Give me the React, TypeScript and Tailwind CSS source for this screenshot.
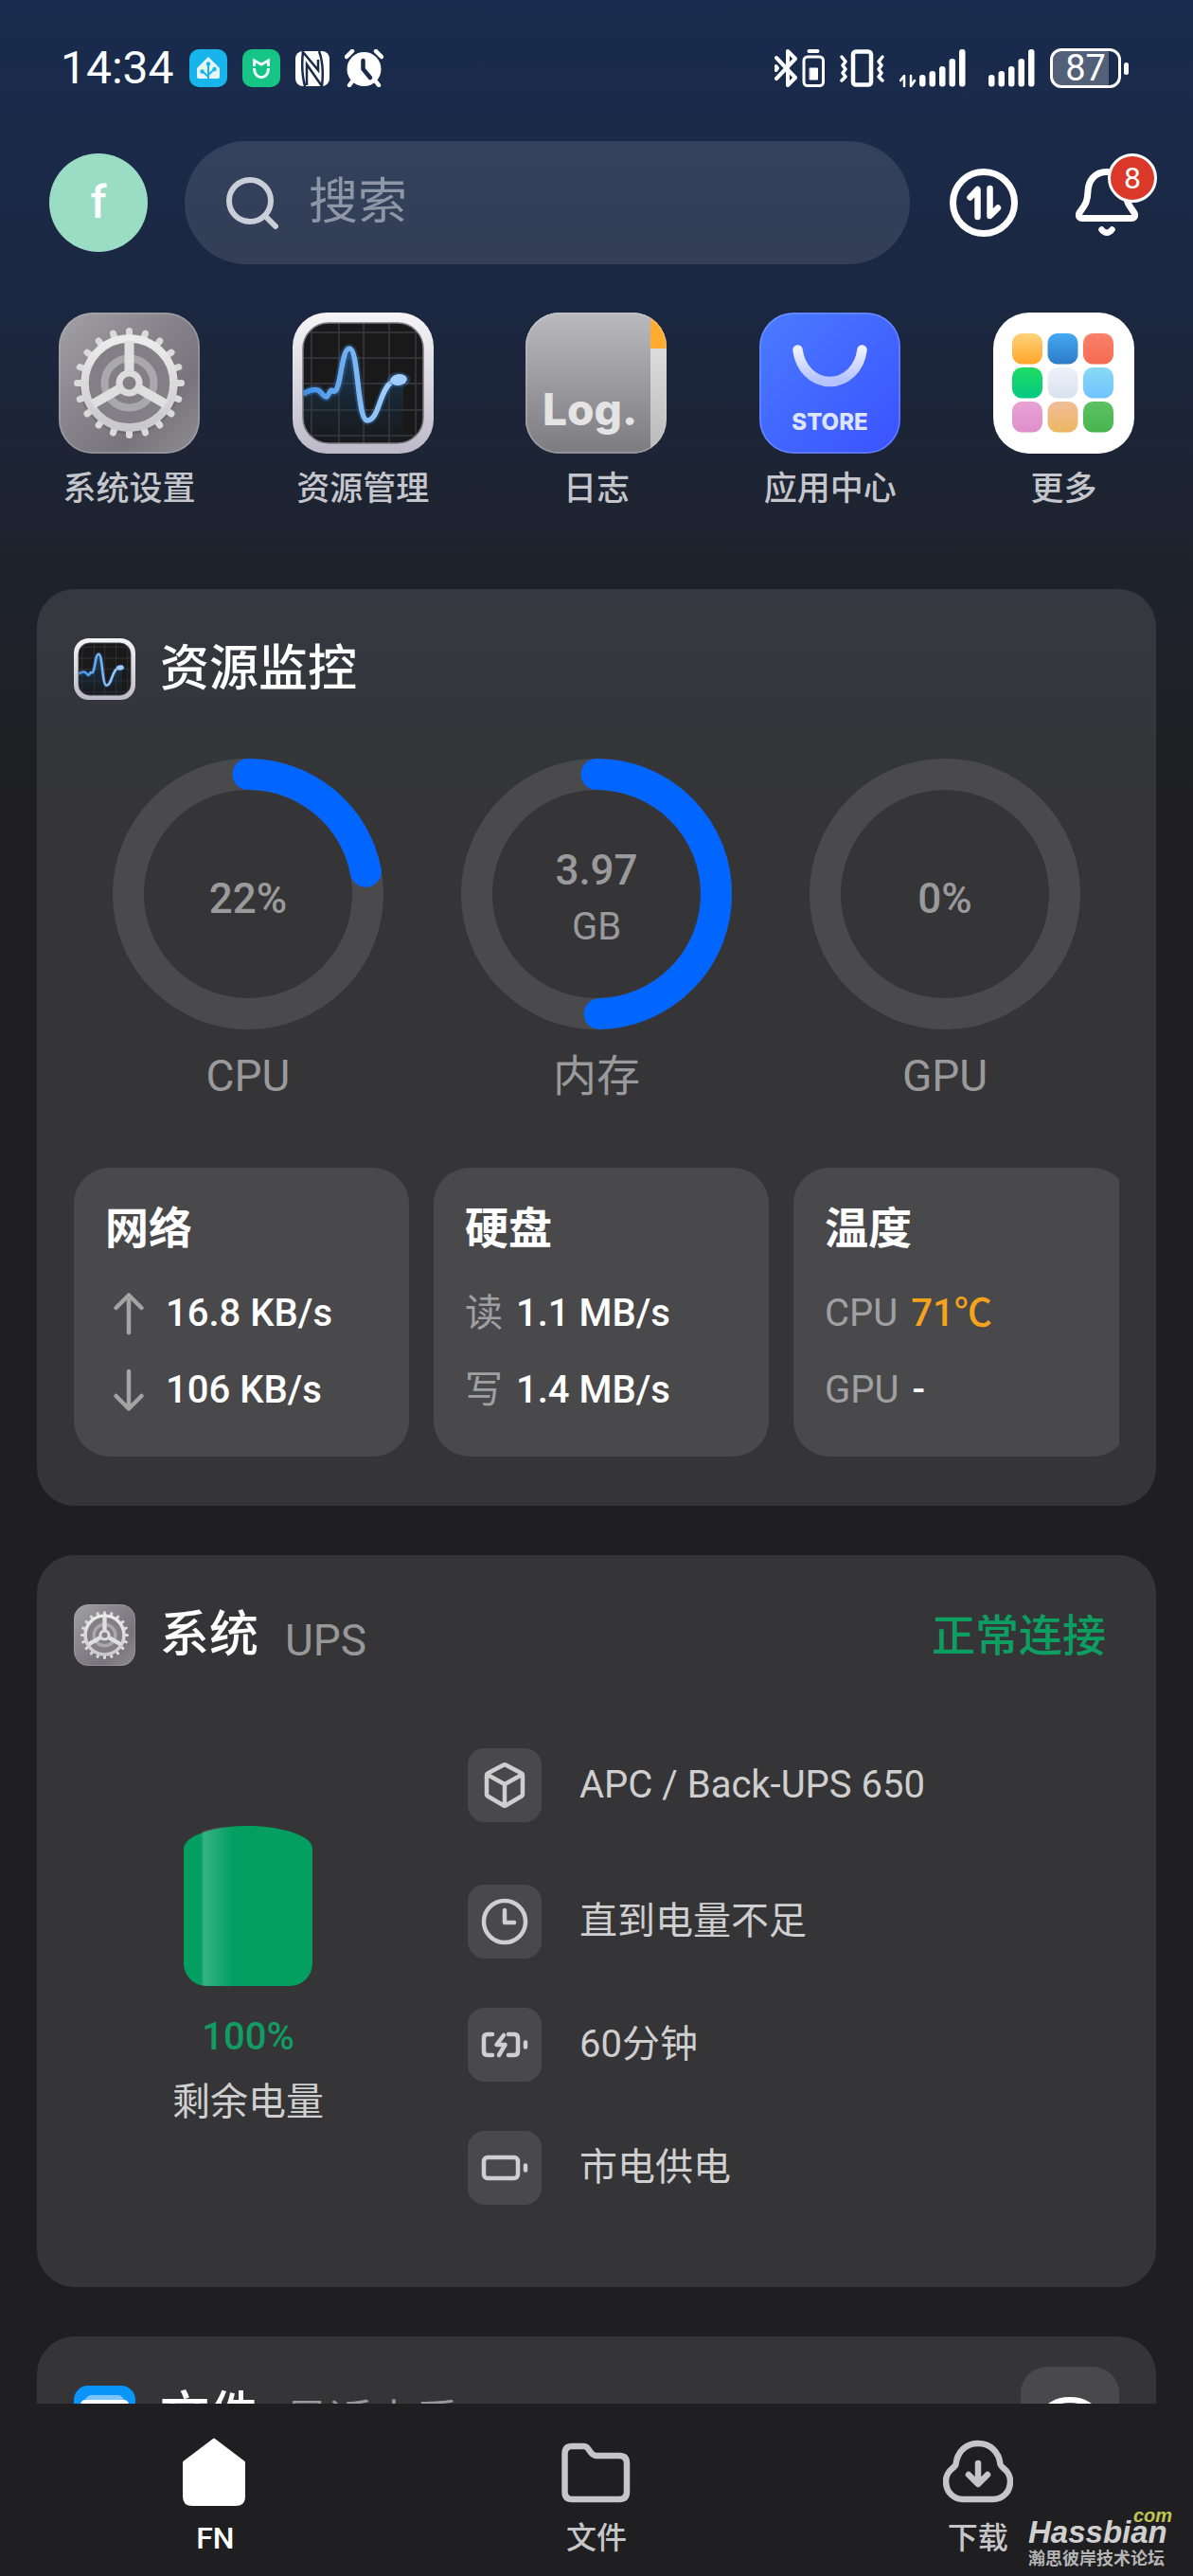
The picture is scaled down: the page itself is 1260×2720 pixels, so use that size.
import React from 'react';

const TEETH = Array.from({ length: 20 }, (_, i) => i * 18);

const GearIcon = ({ className, id }: { className: string; id: string }) => (
  <svg viewBox="0 0 149 149" className={className} aria-hidden="true">
    <defs>
      <linearGradient id={`${id}-bg`} x1="0" y1="0" x2="1" y2="1">
        <stop offset="0" stopColor="#a2a1a6" />
        <stop offset="0.35" stopColor="#8b898f" />
        <stop offset="0.7" stopColor="#77757b" />
        <stop offset="1" stopColor="#8f8e93" />
      </linearGradient>
      <linearGradient id={`${id}-fg`} x1="0" y1="0" x2="0" y2="1">
        <stop offset="0" stopColor="#ececec" />
        <stop offset="1" stopColor="#c9c9cb" />
      </linearGradient>
    </defs>
    <rect width="149" height="149" rx="36" fill={`url(#${id}-bg)`} />
    <rect x="1" y="1" width="147" height="147" rx="35" fill="none" stroke="#b5b4b8" strokeOpacity="0.5" strokeWidth="1.5" />
    <circle cx="74.5" cy="76" r="47" fill="none" stroke="#5f5e63" strokeOpacity="0.5" strokeWidth="11" />
    <circle cx="74.5" cy="74.5" r="43" fill="#828086" />
    <circle cx="74.5" cy="74.5" r="26" fill="none" stroke="#a9a8ac" strokeWidth="8" />
    <g stroke="#dadadb" strokeWidth="7" strokeLinecap="round">
      {TEETH.map((deg) => (
        <line key={deg} x1="74.5" y1="26" x2="74.5" y2="19.5" transform={`rotate(${deg} 74.5 74.5)`} />
      ))}
    </g>
    <circle cx="74.5" cy="74.5" r="47" fill="none" stroke={`url(#${id}-fg)`} strokeWidth="8.5" />
    <g stroke="#dfdfe0" strokeWidth="10">
      <line x1="74.5" y1="63" x2="74.5" y2="30" />
      <line x1="74.5" y1="63" x2="74.5" y2="30" transform="rotate(120 74.5 74.5)" />
      <line x1="74.5" y1="63" x2="74.5" y2="30" transform="rotate(240 74.5 74.5)" />
    </g>
    <circle cx="74.5" cy="74.5" r="10.5" fill="#828086" stroke="#dcdcdd" strokeWidth="7" />
  </svg>
);

const PulseIcon = ({ className, id }: { className: string; id: string }) => (
  <svg viewBox="0 0 149 149" className={className} aria-hidden="true">
    <defs>
      <linearGradient id={`${id}-frame`} x1="0" y1="0" x2="0" y2="1">
        <stop offset="0" stopColor="#f5f5f7" />
        <stop offset="1" stopColor="#bdb9c8" />
      </linearGradient>
      <linearGradient id={`${id}-line`} x1="0" y1="0" x2="1" y2="0">
        <stop offset="0" stopColor="#3f8fe6" />
        <stop offset="1" stopColor="#a5d0fb" />
      </linearGradient>
      <linearGradient id={`${id}-area`} x1="0" y1="0" x2="0" y2="1">
        <stop offset="0" stopColor="#1f5f95" stopOpacity="0.6" />
        <stop offset="1" stopColor="#12263a" stopOpacity="0.1" />
      </linearGradient>
      <clipPath id={`${id}-clip`}>
        <rect x="11" y="11" width="127" height="127" rx="27" />
      </clipPath>
    </defs>
    <rect width="149" height="149" rx="36" fill={`url(#${id}-frame)`} />
    <rect x="11" y="11" width="127" height="127" rx="27" fill="#19191a" />
    <g clipPath={`url(#${id}-clip)`}>
      <path d="M20 11V138M49 11V138M75 11V138M102 11V138M130 11V138M11 21H138M11 48H138M11 75H138M11 103H138M11 130H138" stroke="#4b4b50" strokeWidth="1.5" strokeOpacity="0.7" />
      <path d="M11 86C16 83 22 80 27 82C31 84 33 90 36 89C39 87 39 80 43 83C51 87 51 38 60 38C70 38 68 114 79 114C91 114 92 82 104 77H117V138H11Z" fill={`url(#${id}-area)`} />
      <path d="M11 86C16 83 22 80 27 82C31 84 33 90 36 89C39 87 39 80 43 83C51 87 51 38 60 38C70 38 68 114 79 114C91 114 92 82 104 74" fill="none" stroke="#3a8be0" strokeOpacity="0.25" strokeWidth="10" />
      <path d="M11 86C16 83 22 80 27 82C31 84 33 90 36 89C39 87 39 80 43 83C51 87 51 38 60 38C70 38 68 114 79 114C91 114 92 82 104 74" fill="none" stroke={`url(#${id}-line)`} strokeWidth="5.5" />
      <ellipse cx="112" cy="71" rx="12" ry="8" fill="#3a8be0" fillOpacity="0.3" />
      <ellipse cx="112" cy="71" rx="9" ry="6" fill="#9fccfb" transform="rotate(-8 112 71)" />
    </g>
    <rect x="11" y="11" width="127" height="127" rx="27" fill="none" stroke="#77767d" strokeWidth="1.5" />
  </svg>
);

const LogIcon = () => (
  <svg viewBox="0 0 149 149" className="size-[149px]" aria-hidden="true">
    <defs>
      <linearGradient id="log-bg" x1="0" y1="0" x2="0" y2="1">
        <stop offset="0" stopColor="#bab9be" />
        <stop offset="1" stopColor="#7c7b80" />
      </linearGradient>
      <linearGradient id="log-page" x1="0" y1="0" x2="0" y2="1">
        <stop offset="0" stopColor="#e9e9e9" />
        <stop offset="1" stopColor="#b9b9ba" />
      </linearGradient>
      <clipPath id="log-clip">
        <rect width="149" height="149" rx="36" />
      </clipPath>
    </defs>
    <g clipPath="url(#log-clip)">
      <rect width="149" height="149" fill="url(#log-page)" />
      <rect x="130" width="19" height="38" fill="#ffab2e" />
      <rect width="132" height="149" fill="url(#log-bg)" />
    </g>
    <rect x="1" y="1" width="147" height="147" rx="35" fill="none" stroke="#d6d6d8" strokeOpacity="0.3" strokeWidth="1.5" />
    <text x="18" y="119" fill="#e4e4e5" className="font-['Inter'] text-[46px] font-extrabold">Log.</text>
  </svg>
);

const StoreIcon = () => (
  <svg viewBox="0 0 149 149" className="size-[149px]" aria-hidden="true">
    <defs>
      <linearGradient id="store-bg" x1="0" y1="0" x2="1" y2="1">
        <stop offset="0" stopColor="#4a7bff" />
        <stop offset="1" stopColor="#3a52ff" />
      </linearGradient>
      <linearGradient id="store-bag" x1="0" y1="0" x2="0" y2="1">
        <stop offset="0" stopColor="#ecf0ff" />
        <stop offset="1" stopColor="#b4c2ff" />
      </linearGradient>
    </defs>
    <rect width="149" height="149" rx="36" fill="url(#store-bg)" />
    <rect x="1" y="1" width="147" height="147" rx="35" fill="none" stroke="#8aa5ff" strokeOpacity="0.5" strokeWidth="1.5" />
    <path d="M40.5 39.5C43 59 57 73 74.5 73S106 59 108.5 39.5" fill="none" stroke="url(#store-bag)" strokeWidth="10.5" strokeLinecap="round" />
    <text x="74.5" y="124" textAnchor="middle" fill="#dde4ff" className="font-['Inter'] text-[24px] font-extrabold">STORE</text>
  </svg>
);

const TILES = [
  ['#ffd27a', '#ffa629'], ['#45a8f2', '#2d7cc9'], ['#f9806a', '#f66b52'],
  ['#1fdc62', '#06c985'], ['#eef1f9', '#d9e2f0'], ['#8ad8f3', '#6fc4ff'],
  ['#e9a1d3', '#de8fcd'], ['#f0be97', '#edb662'], ['#5cc163', '#48b54d'],
];

const MoreIcon = () => (
  <svg viewBox="0 0 149 149" className="size-[149px]" aria-hidden="true">
    <rect width="149" height="149" rx="38" fill="#fff" />
    {TILES.map(([from, to], i) => (
      <g key={from}>
        <linearGradient id={`tile-${i}`} x1="0" y1="0" x2="0" y2="1">
          <stop offset="0" stopColor={from} />
          <stop offset="1" stopColor={to} />
        </linearGradient>
        <rect x={20 + (i % 3) * 37.5} y={22 + Math.floor(i / 3) * 36} width="32" height="32.5" rx="10" fill={`url(#tile-${i})`} />
      </g>
    ))}
  </svg>
);

const Signal = ({ arrows }: { arrows?: boolean }) => (
  <svg viewBox="0 0 70 40" className={arrows ? 'h-10 w-[70px]' : 'h-10 w-[57px]'} preserveAspectRatio="xMaxYMid slice" fill="#fff" aria-hidden="true">
    {arrows && <path d="M1 33L5 28V39M12 28V39L16 33" fill="none" stroke="#fff" strokeWidth="2.5" strokeLinecap="round" strokeLinejoin="round" />}
    <rect x="21" y="27" width="6.5" height="12.5" rx="3" />
    <rect x="31.5" y="23" width="6.5" height="16.5" rx="3" />
    <rect x="42" y="18" width="6.5" height="21.5" rx="3" />
    <rect x="52.5" y="10" width="6.5" height="29.5" rx="3" />
    <rect x="63" y="0" width="6.5" height="39.5" rx="3" />
  </svg>
);

const StatusBar = () => (
  <div className="flex h-36 items-center justify-between pr-[68px] pl-16">
    <div className="flex items-center gap-4">
      <span className="text-[48px] leading-[60px]">14:34</span>
      <svg viewBox="0 0 40 40" className="size-10" aria-hidden="true">
        <rect width="40" height="40" rx="10" fill="#18b4ec" />
        <path d="M20 8L32 20V29Q32 31 30 31H10Q8 31 8 29V20Z" fill="#e6f5fb" />
        <path d="M20 31V16M20 29L13.5 23M20 27L26.5 21" stroke="#18b4ec" strokeWidth="2" />
        <circle cx="20" cy="15.5" r="2.2" fill="#18b4ec" />
        <circle cx="13.5" cy="23.5" r="2.2" fill="#18b4ec" />
        <circle cx="26.5" cy="21" r="2.2" fill="#18b4ec" />
      </svg>
      <svg viewBox="0 0 40 40" className="size-10" fill="none" aria-hidden="true">
        <rect width="40" height="40" rx="10" fill="#16c486" />
        <path d="M12.5 18V12L20 16L27.5 12V18" stroke="#f0fff9" strokeWidth="3" />
        <path d="M12.5 20C12.5 33 27.5 33 27.5 20" stroke="#f0fff9" strokeWidth="3" />
      </svg>
      <svg viewBox="0 0 36 37" className="h-[37px] w-9" fill="none" aria-hidden="true">
        <rect width="36" height="37" rx="8" fill="#fff" />
        <path d="M8 0C6.500 14 6.500 24 10 37M8 1L24 20V9M12 36V14L28 37M25 0C29.500 12 29.500 24 28 37" stroke="#1a2a49" strokeWidth="2.500" />
      </svg>
      <svg viewBox="0 0 41 40" className="h-10 w-[41px]" aria-hidden="true">
        <circle cx="20.5" cy="21" r="18" fill="#fff" />
        <path d="M2 8L8 2M39 8L33 2M8 34L5 38M33 34L36 38" stroke="#fff" strokeWidth="4.5" strokeLinecap="round" />
        <path d="M19.5 12V21L27 30" fill="none" stroke="#1a2a49" strokeWidth="4.5" strokeLinecap="round" />
      </svg>
    </div>
    <div className="flex items-center gap-4">
      <svg viewBox="0 0 53 40" className="h-10 w-[53px]" fill="none" stroke="#fff" strokeLinejoin="round" strokeLinecap="round" aria-hidden="true">
        <path d="M2 9L22 30L14 38V2L22 10L2 31M1.5 18L3 20L1.5 22" strokeWidth="4" />
        <rect x="31" y="8" width="20.5" height="30.5" rx="4" strokeWidth="3" />
        <path d="M36.5 2H45.5" strokeWidth="4" />
        <rect x="37.5" y="20" width="8" height="12" fill="#fff" strokeWidth="1" />
      </svg>
      <svg viewBox="0 0 47 40" className="h-10 w-[47px]" fill="none" stroke="#fff" strokeLinejoin="round" strokeLinecap="round" aria-hidden="true">
        <rect x="14" y="2.5" width="19" height="35" rx="3" strokeWidth="4.5" />
        <path d="M2 8L6 13L3 17L6 21L3 25L6 29L2 33M45 8L41 13L44 17L41 21L44 25L41 29L45 33" strokeWidth="3.5" />
      </svg>
      <Signal arrows />
      <Signal />
      <div className="flex items-center gap-[3px]">
        <div className="flex h-[42px] w-[75px] items-center justify-center rounded-[12px] border-3 border-white bg-linear-to-r from-white/25 from-85% to-transparent to-85% text-[38px] leading-[38px]">
          87
        </div>
        <div className="h-[13px] w-[5px] rounded-full bg-white" />
      </div>
    </div>
  </div>
);

const SearchRow = () => (
  <div className="flex items-center pt-[5px] pr-[58px] pl-[52px]">
    <button aria-label="账户" className="flex size-[104px] items-center justify-center rounded-full bg-[#9bdcc5] text-[48px] leading-[60px] font-medium">f</button>
    <label className="ml-[39px] flex h-[130px] min-w-0 flex-1 items-center gap-8 rounded-full bg-white/11 pl-11">
      <svg viewBox="0 0 55 56" className="h-14 w-[55px] shrink-0" fill="none" stroke="#c9ced9" strokeWidth="6" strokeLinecap="round" aria-hidden="true">
        <circle cx="25" cy="26" r="22" />
        <path d="M42 43L52 53" />
      </svg>
      <input type="search" placeholder="搜索" className="min-w-0 flex-1 bg-transparent text-[52px] leading-[64px] outline-none placeholder:text-[#8f96a5]" />
    </label>
    <button aria-label="传输" className="ml-[42px]">
      <svg viewBox="0 0 72 72" className="size-[72px]" fill="none" stroke="#fff" strokeLinecap="round" strokeLinejoin="round">
        <circle cx="36" cy="36" r="32.5" strokeWidth="7" />
        <path d="M21.5 30.5L29.5 22V51" strokeWidth="6.5" />
        <path d="M42.5 21V50L51 41.5" strokeWidth="6.5" />
      </svg>
    </button>
    <button aria-label="通知" className="relative ml-[61px]">
      <svg viewBox="0 0 66 72" className="h-[72px] w-[66px]" fill="none" stroke="#fff" strokeLinecap="round" strokeLinejoin="round">
        <path d="M33 3.5C20 3.5 13.5 13 13 24C12.5 37 9 39 4.5 46C2 50 4 52.5 7 52.5H59C62 52.5 64 50 61.5 46C57 39 53.5 37 53 24C52.5 13 46 3.5 33 3.5Z" strokeWidth="7" />
        <path d="M27.5 64.5Q33 71 38.5 64.5" strokeWidth="6.5" />
      </svg>
      <span className="absolute -top-4 -right-5 flex size-[52px] items-center justify-center rounded-full border-3 border-white bg-[#dc3829] text-[32px] leading-[32px]">8</span>
    </button>
  </div>
);

const APPS = [
  { label: '系统设置', icon: <GearIcon className="size-[149px]" id="app-gear" /> },
  { label: '资源管理', icon: <PulseIcon className="size-[149px]" id="app-pulse" /> },
  { label: '日志', icon: <LogIcon /> },
  { label: '应用中心', icon: <StoreIcon /> },
  { label: '更多', icon: <MoreIcon /> },
];

const AppRow = () => (
  <nav className="mt-[51px] grid grid-cols-5 px-[13px]">
    {APPS.map(({ label, icon }) => (
      <a key={label} href="#" className="flex flex-col items-center gap-[14px] text-[35px] leading-[48px] font-medium text-[#c4c6cb]">
        {icon}
        {label}
      </a>
    ))}
  </nav>
);

interface GaugeProps {
  label: string;
  ratio: number;
  value: string;
  unit?: string;
}

const Gauge: React.FC<GaugeProps> = ({ label, ratio, value, unit }) => (
  <div className="flex flex-col items-center text-[#9a9a9c]">
    <div className="relative size-[286px]">
      <svg viewBox="0 0 286 286" className="size-full -rotate-90" fill="none" strokeWidth="33" aria-hidden="true">
        <circle cx="143" cy="143" r="126.5" stroke="#4a4a4c" />
        {ratio > 0 && (
          <circle cx="143" cy="143" r="126.5" stroke="#0066ff" strokeLinecap="round" pathLength="100" strokeDasharray={`${ratio} 200`} />
        )}
      </svg>
      <div className="absolute inset-0 flex flex-col items-center justify-center pt-[10px]">
        <span className="text-[44px] leading-[60px] font-medium">{value}</span>
        {unit && <span className="text-[40px] leading-[60px]">{unit}</span>}
      </div>
    </div>
    <div className="mt-[19px] text-[46px] leading-[60px]">{label}</div>
  </div>
);

const Arrow = ({ down }: { down?: boolean }) => (
  <svg viewBox="0 0 50 50" className={down ? 'size-[50px] rotate-180' : 'size-[50px]'} fill="none" stroke="#a4a4a5" strokeWidth="4.5" strokeLinecap="round" strokeLinejoin="round" aria-hidden="true">
    <path d="M25 45V6M11.5 19L25 5.5L38.5 19" />
  </svg>
);

const StatCard = ({ title, rows }: { title: string; rows: [React.ReactNode, string, string?][] }) => (
  <div className="w-[354px] shrink-0 rounded-[38px] bg-white/10 px-[33px] pt-[34px] pb-[30px]">
    <h3 className="mb-[19px] text-[46px] leading-[60px] font-bold">{title}</h3>
    {rows.map(([name, value, color], i) => (
      <div key={i} className="flex h-[81px] items-center gap-[14px] text-[40px] leading-[60px]">
        <span className="text-[#a0a0a2]">{name}</span>
        <span className={`font-medium ${color ?? 'text-white'}`}>{value}</span>
      </div>
    ))}
  </div>
);

const ResourceCard = () => (
  <section className="rounded-[40px] bg-white/10 px-[39px] py-[52px]">
    <div className="flex h-[65px] items-center gap-[26px]">
      <PulseIcon className="size-[65px]" id="card-pulse" />
      <h2 className="text-[52px] leading-[64px] font-medium">资源监控</h2>
    </div>
    <div className="mt-[62px] grid grid-cols-3">
      <Gauge label="CPU" ratio={22} value="22%" />
      <Gauge label="内存" ratio={49.6} value="3.97" unit="GB" />
      <Gauge label="GPU" ratio={0} value="0%" />
    </div>
    <div className="mt-[67px] flex gap-[26px] overflow-hidden">
      <StatCard title="网络" rows={[[<Arrow />, '16.8 KB/s'], [<Arrow down />, '106 KB/s']]} />
      <StatCard title="硬盘" rows={[['读', '1.1 MB/s'], ['写', '1.4 MB/s']]} />
      <StatCard title="温度" rows={[['CPU', '71℃', 'text-[#f5a21d]'], ['GPU', '-']]} />
    </div>
  </section>
);

const UPS_ROWS = [
  {
    text: 'APC / Back-UPS 650',
    icon: <path d="M24 3.5Q25 3 26 3.5L43 12.5Q44 13 44 14.5V34.5Q44 36 43 36.5L26 46.5Q25 47 24 46.5L7 36.5Q6 36 6 34.5V14.5Q6 13 7 12.5ZM7 14L25 24L43 14M25 24V46" />,
  },
  {
    text: '直到电量不足',
    icon: <><circle cx="25" cy="25" r="22" /><path d="M25 13V26H35" /></>,
  },
  {
    text: '60分钟',
    icon: <><path d="M12 14H7Q3 14 3 18V32Q3 36 7 36H12M29 14H35Q39 14 39 18V32Q39 36 35 36H29M24 15L16.5 25H25.5L19 36" /><path d="M47 22.5V27.5" /></>,
  },
  {
    text: '市电供电',
    icon: <><rect x="3" y="14" width="36" height="22" rx="4" /><path d="M47 22.5V27.5" /></>,
  },
];

const UpsCard = () => (
  <section className="rounded-[40px] bg-white/10 px-[39px] pt-[52px] pb-[87px]">
    <div className="flex h-[65px] items-center gap-[26px]">
      <GearIcon className="size-[65px]" id="card-gear" />
      <div className="flex items-end gap-7">
        <h2 className="text-[52px] leading-[64px] font-medium">系统</h2>
        <span className="text-[46px] leading-[54px] text-[#98989a]">UPS</span>
      </div>
      <span className="mr-[14px] ml-auto text-[46px] leading-[64px] font-medium text-[#0d9e62]">正常连接</span>
    </div>
    <div className="mt-[87px] grid grid-cols-3 items-center">
      <div className="flex flex-col items-center pt-1 text-[40px] leading-[60px] text-[#cfcfd0]">
        <svg viewBox="0 0 136 169" className="h-[169px] w-[136px]" aria-hidden="true">
          <defs>
            <linearGradient id="shine" gradientUnits="userSpaceOnUse" x1="18" y1="0" x2="52" y2="0">
              <stop offset="0" stopColor="#fff" stopOpacity="0" />
              <stop offset="0.1" stopColor="#fff" stopOpacity="0.2" />
              <stop offset="0.9" stopColor="#fff" stopOpacity="0.03" />
              <stop offset="1" stopColor="#fff" stopOpacity="0" />
            </linearGradient>
          </defs>
          <path d="M0 24C0 10 34 0 68 0S136 10 136 24V145A24 24 0 0 1 112 169H24A24 24 0 0 1 0 145Z" fill="#029f61" />
          <path d="M18 6.5Q34 1 52 0V169H24L18 168Z" fill="url(#shine)" />
        </svg>
        <span className="mt-6 font-medium text-[#129c63]">100%</span>
        <span className="mt-[9px]">剩余电量</span>
      </div>
      <ul className="col-span-2 flex flex-col gap-[52px] pl-12">
        {UPS_ROWS.map(({ text, icon }) => (
          <li key={text} className="flex items-center gap-10 text-[40px] leading-[60px] text-[#cfcfd0] first:pb-[14px]">
            <span className="flex size-[78px] items-center justify-center rounded-[18px] bg-white/10">
              <svg viewBox="0 0 50 50" className="size-[50px]" fill="none" stroke="#cfcfd0" strokeWidth="4.5" strokeLinecap="round" strokeLinejoin="round" aria-hidden="true">
                {icon}
              </svg>
            </span>
            {text}
          </li>
        ))}
      </ul>
    </div>
  </section>
);

const FilesCard = () => (
  <section className="rounded-[40px] bg-white/10 px-[39px] pt-8 pb-[52px]">
    <div className="flex h-[104px] items-center gap-[26px]">
      <svg viewBox="0 0 65 65" className="size-[65px]" aria-hidden="true">
        <rect width="65" height="65" rx="15" fill="#0a95fb" />
        <path d="M17 10H48Q53 12 54 18H11Q12 12 17 10Z" fill="#7cc3fa" />
        <rect x="7" y="15" width="51" height="40" rx="5" fill="#fff" />
      </svg>
      <div className="flex items-end gap-7">
        <h2 className="text-[52px] leading-[64px] font-medium">文件</h2>
        <span className="text-[46px] leading-[54px] text-[#98989a]">最近查看</span>
      </div>
      <button aria-label="显示" className="ml-auto flex size-[104px] items-center justify-center rounded-[28px] bg-white/10">
        <svg viewBox="0 0 60 40" className="h-10 w-[60px]" fill="none" stroke="#fff" strokeWidth="6">
          <ellipse cx="30" cy="20" rx="27" ry="17" />
          <circle cx="30" cy="20" r="7" />
        </svg>
      </button>
    </div>
  </section>
);

const TABS = [
  {
    label: 'FN',
    color: 'text-white',
    icon: <path d="M35 3Q36 2 37 3L68 26.5Q69 27 69 28V64Q69 74 59 74H13Q3 74 3 64V28Q3 27 4 26.5Z" fill="currentColor" stroke="none" />,
  },
  {
    label: '文件',
    color: 'text-[#c6c6c8]',
    icon: <path d="M11 11H24C30 11 29 21 37 21H61Q69 21 69 29V59Q69 67 61 67H11Q3.5 67 3.5 59V19Q3.5 11 11 11Z" />,
  },
  {
    label: '下载',
    color: 'text-[#c6c6c8]',
    icon: <><path d="M37 8C50 8 59 17 60.5 30C61 34 71 36 71 48C71 60 62 67 53 67H21C12 67 3 60 3 48C3 36 13 34 13.5 30C15 17 24 8 37 8Z" /><path d="M37 29V50M27 41L37 51L47 41" /></>,
  },
];

const TabBar = () => (
  <nav className="relative grid h-[182px] shrink-0 grid-cols-3 bg-[#1f1f21] px-[26px] pt-[34px]">
    {TABS.map(({ label, color, icon }) => (
      <a key={label} href="#" className={`flex flex-col items-center gap-[10px] text-[32px] leading-10 font-medium ${color}`}>
        <svg viewBox="0 0 74 78" className="h-[78px] w-[74px]" fill="none" stroke="currentColor" strokeWidth="6.5" strokeLinecap="round" strokeLinejoin="round" aria-hidden="true">
          {icon}
        </svg>
        {label}
      </a>
    ))}
    {/* forum stamp over the corner of the bar */}
    <div className="absolute right-[22px] bottom-[6px] w-[152px]">
      <div className="-mb-1 text-right font-['Liberation_Sans'] text-[20px] leading-3 font-bold text-[#c0c455] italic">com</div>
      <div className="font-['Liberation_Sans'] text-[33px] leading-8 font-bold text-[#d0d0d0] italic">Hassbian</div>
      <div className="text-[18px] leading-6 font-bold text-[#b4b4b4]">瀚思彼岸技术论坛</div>
    </div>
  </nav>
);

export default function App() {
  return (
    <div className="flex h-screen flex-col bg-[#1f1f21] font-['Roboto','Noto_Sans_CJK_SC',sans-serif] text-white">
      <main className="min-h-0 flex-1 overflow-hidden bg-[linear-gradient(#192c4f_0px,#1b2740_330px,#1e222b_620px,#1f1f21_860px)]">
        <StatusBar />
        <SearchRow />
        <AppRow />
        <div className="mt-[81px] flex flex-col gap-[52px] px-[39px]">
          <ResourceCard />
          <UpsCard />
          <FilesCard />
        </div>
      </main>
      <TabBar />
    </div>
  );
}
